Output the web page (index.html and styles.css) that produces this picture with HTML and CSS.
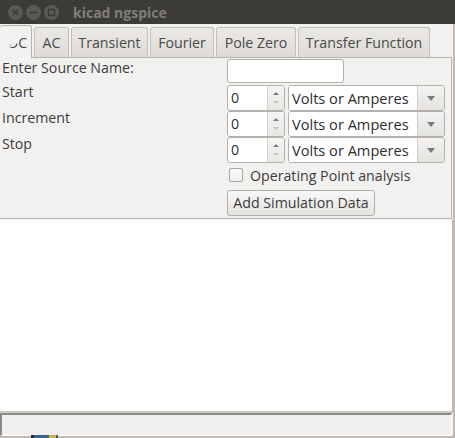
FILE: index.html
```html
<!DOCTYPE html>
<html>
<head>
<meta charset="utf-8">
<link rel="stylesheet" href="styles.css">
</head>
<body>
<div class="window">
  <div class="titlebar">
    <div class="wbtns">
      <span class="wbtn"><svg width="15" height="15" viewBox="0 0 15 15"><circle cx="7.5" cy="7.5" r="7.5" fill="#5a5954"/><path d="M5 5 L10 10 M10 5 L5 10" stroke="#3b3a36" stroke-width="1.6"/></svg></span>
      <span class="wbtn"><svg width="15" height="15" viewBox="0 0 15 15"><circle cx="7.5" cy="7.5" r="7.5" fill="#5a5954"/><path d="M3.5 7.5 H11.5" stroke="#3b3a36" stroke-width="1.6"/></svg></span>
      <span class="wbtn"><svg width="15" height="15" viewBox="0 0 15 15"><circle cx="7.5" cy="7.5" r="7.5" fill="#5a5954"/><rect x="4.5" y="4.5" width="6" height="6" fill="none" stroke="#3b3a36" stroke-width="1.3"/></svg></span>
    </div>
    <div class="title">kicad ngspice</div>
  </div>
  <div class="tabs">
    <div class="tab active"><span class="dc-d">D</span>C</div>
    <div class="tab t-ac">AC</div>
    <div class="tab t-tr">Transient</div>
    <div class="tab t-fo">Fourier</div>
    <div class="tab t-pz">Pole Zero</div>
    <div class="tab t-tf">Transfer Function</div>
  </div>
  <div class="panel">
    <div class="row r-src">
      <div class="label">Enter Source Name:</div>
      <div class="ctrl"><div class="textbox"></div></div>
    </div>
    <div class="row r-spin">
      <div class="label">Start</div>
      <div class="ctrl">
        <div class="spin"><div class="spin-val">0</div><div class="spin-arr"><i class="up"></i><i class="dn"></i></div></div>
        <div class="combo"><div class="combo-val">Volts or Amperes</div><div class="combo-btn"><i></i></div></div>
      </div>
    </div>
    <div class="row r-spin">
      <div class="label">Increment</div>
      <div class="ctrl">
        <div class="spin"><div class="spin-val">0</div><div class="spin-arr"><i class="up"></i><i class="dn"></i></div></div>
        <div class="combo"><div class="combo-val">Volts or Amperes</div><div class="combo-btn"><i></i></div></div>
      </div>
    </div>
    <div class="row r-spin">
      <div class="label">Stop</div>
      <div class="ctrl">
        <div class="spin"><div class="spin-val">0</div><div class="spin-arr"><i class="up"></i><i class="dn"></i></div></div>
        <div class="combo"><div class="combo-val">Volts or Amperes</div><div class="combo-btn"><i></i></div></div>
      </div>
    </div>
    <div class="row r-chk">
      <div class="label"></div>
      <div class="ctrl"><span class="checkbox"></span><span class="chk-label">Operating Point analysis</span></div>
    </div>
    <div class="row r-btn">
      <div class="label"></div>
      <div class="ctrl"><div class="button">Add Simulation Data</div></div>
    </div>
  </div>
  <div class="output"></div>
  <div class="status"></div>
</div>
<div class="desktop"><div class="deskicon"></div></div>
</body>
</html>
```

FILE: styles.css
```css
html, body {
  margin: 0;
  padding: 0;
}
body {
  width: 455px;
  height: 438px;
  overflow: hidden;
  background: #bdb9b4;
  font-family: "Open Sans", "DejaVu Sans", sans-serif;
  font-size: 14.2px;
  color: #3c3c3c;
}
.window {
  width: 453px;
  height: 435px;
  display: flex;
  flex-direction: column;
  background: #f2f1f0;
}
.titlebar {
  height: 24px;
  background: #3c3b37;
  display: flex;
  align-items: center;
  width: 455px;
  flex: none;
}
.wbtns {
  display: flex;
  gap: 3px;
  margin-left: 8px;
  height: 15px;
}
.wbtn { display: block; width: 15px; height: 15px; }
.wbtn svg { display: block; }
.title {
  margin-left: 14px;
  font-weight: bold;
  font-size: 14px;
  color: #7f7e79;
}
.tabs {
  display: flex;
  align-items: flex-end;
  gap: 2px;
  border-bottom: 1px solid #b7b4af;
  box-sizing: border-box;
  height: 34px;
  margin-right: 1px;
  flex: none;
}
.tab {
  box-sizing: border-box;
  height: 30px;
  border: 1px solid #c2bfba;
  border-bottom: none;
  border-radius: 3px 3px 0 0;
  background: linear-gradient(#ebe9e6, #dddad6);
  display: flex;
  align-items: center;
  justify-content: center;
  color: #4a4a4a;
  flex: none;
  padding-bottom: 1px;
}
.tab.active {
  width: 32px;
  height: 33px;
  background: #f2f1f0;
  border-color: #b7b4af;
  border-left: none;
  margin-bottom: -1px;
  justify-content: flex-start;
  padding-left: 8px;
  padding-top: 2px;
}
.dc-d { clip-path: inset(55% 0 0 25%); }
.t-ac { width: 35px; }
.t-tr { width: 77px; }
.t-fo { width: 64px; }
.t-pz { width: 80px; }
.t-tf { width: 132px; }
.panel {
  height: 161px;
  box-sizing: border-box;
  border-right: 1px solid #b7b4af;
  border-bottom: 1px solid #b7b4af;
  margin-right: 1px;
  padding-top: 1px;
  display: flex;
  flex-direction: column;
  flex: none;
}
.row {
  display: flex;
}
.label {
  width: 225px;
  padding-left: 2px;
  line-height: 18px;
  flex: none;
}
.ctrl {
  display: flex;
  align-items: center;
}
.r-src { height: 26px; }
.r-src .ctrl { align-items: flex-start; }
.textbox {
  width: 117px;
  height: 24px;
  box-sizing: border-box;
  background: #fff;
  border: 1px solid #b4b1ab;
  border-radius: 3px;
}
.r-spin { height: 26px; }
.r-spin .label { line-height: 14px; }
.r-spin .ctrl { align-items: stretch; }
.spin {
  width: 58px;
  height: 26px;
  box-sizing: border-box;
  display: flex;
  border: 1px solid #b4b1ab;
  border-radius: 3px;
  background: #fff;
  overflow: hidden;
}
.spin-val {
  flex: 1;
  padding-left: 3px;
  line-height: 24px;
  color: #2e2e2e;
}
.spin-arr {
  width: 16px;
  border-left: 1px solid #d7d4cf;
  background: linear-gradient(#f6f5f4, #e9e7e4);
  display: flex;
  flex-direction: column;
  align-items: center;
  justify-content: center;
  gap: 6px;
}
.spin-arr i {
  display: block;
  width: 0;
  height: 0;
  border-left: 3px solid transparent;
  border-right: 3px solid transparent;
}
.spin-arr i.up { border-bottom: 3px solid #7d7d7d; }
.spin-arr i.dn { border-top: 3px solid #c4c4c4; }
.combo {
  margin-left: 3px;
  width: 157px;
  height: 26px;
  box-sizing: border-box;
  border: 1px solid #b4b1ab;
  border-radius: 3px;
  display: flex;
  overflow: hidden;
}
.combo-val {
  flex: 1;
  background: #fff;
  padding-left: 3px;
  line-height: 24px;
  color: #2e2e2e;
  font-size: 14.6px;
}
.combo-btn {
  width: 26px;
  border-left: 1px solid #cfccc7;
  background: linear-gradient(#f4f3f2, #e4e2df);
  display: flex;
  align-items: center;
  justify-content: center;
}
.combo-btn i {
  display: block;
  width: 0;
  height: 0;
  border-left: 4px solid transparent;
  border-right: 4px solid transparent;
  border-top: 5px solid #7a7a7a;
}
.r-chk { height: 24px; }
.r-chk .ctrl { padding-left: 2px; }
.checkbox {
  width: 14px;
  height: 14px;
  box-sizing: border-box;
  border: 1px solid #a8a5a0;
  border-radius: 2px;
  background: linear-gradient(#fbfbfb, #efeeed);
}
.chk-label { margin-left: 7px; }
.r-btn { height: 29px; padding-top: 2px; box-sizing: border-box; }
.button {
  width: 148px;
  height: 26px;
  box-sizing: border-box;
  border: 1px solid #b1aea9;
  border-radius: 3px;
  background: linear-gradient(#f8f8f7, #e5e3e0);
  display: flex;
  align-items: center;
  justify-content: center;
}
.output {
  margin-top: 1px;
  height: 191px;
  background: #fff;
  border-right: 1px solid #b9b6b1;
  border-bottom: 2px solid #cdc9c4;
  flex: none;
}
.status {
  height: 23px;
  box-sizing: border-box;
  border-top: 2px solid #8c8a86;
  border-left: 2px solid #8c8a86;
  border-bottom: 1px solid #fff;
  border-right: 1px solid #fff;
  background: #f1f0ef;
  margin-right: 1px;
  flex: none;
}
.desktop {
  height: 3px;
  position: relative;
}
.deskicon {
  position: absolute;
  left: 31px;
  top: 0;
  width: 27px;
  height: 3px;
  background: linear-gradient(90deg, #2a2a2a 0 3px, #3a6590 3px 18px, #c9b24a 18px 25px, #555 25px);
}
```
